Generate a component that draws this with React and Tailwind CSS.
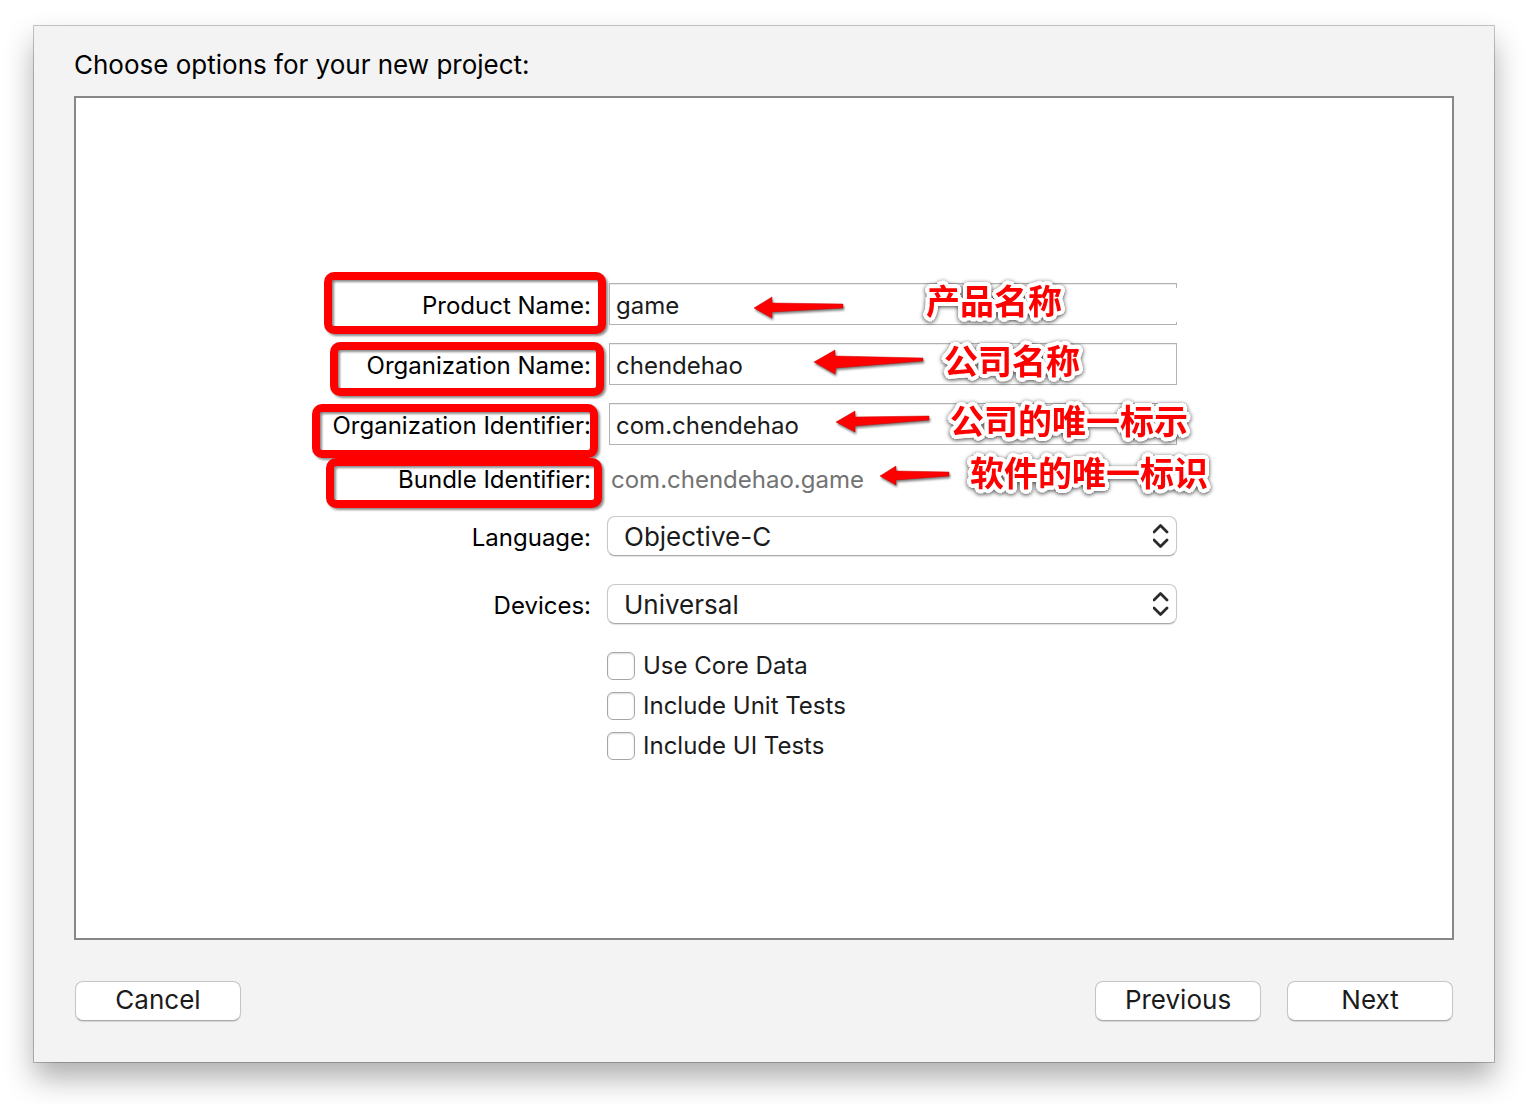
const labelClass = 'w-[259px] shrink-0 whitespace-nowrap text-right text-black';
const inputClass =
  'h-[42px] w-full rounded-none border border-[#b2b2b2] bg-white px-1.5 pt-0.5 text-[#1b1b1b] shadow-[inset_0_1px_0_#ececec] outline-none';
const frameClass =
  'pointer-events-none absolute rounded-[10px] border-8 border-[#ff0000] drop-shadow-[2px_2px_1px_rgba(0,0,0,0.45)]';
const noteClass =
  'pointer-events-none absolute whitespace-nowrap font-["Noto_Sans_CJK_SC",sans-serif] text-[34px] font-bold leading-[40px] text-[#ff0000] [text-shadow:4px_0_white,4px_1px_white,3px_3px_white,1px_4px_white,0_4px_white,-1px_4px_white,-3px_3px_white,-4px_1px_white,-4px_0_white,-4px_-1px_white,-3px_-3px_white,-1px_-4px_white,0_-4px_white,1px_-4px_white,3px_-3px_white,4px_-1px_white,2px_0_white,0_2px_white,-2px_0_white,0_-2px_white] drop-shadow-[0_1px_2px_rgba(0,0,0,0.75)]';
const buttonClass =
  'h-10 w-[166px] rounded-lg border border-[#c6c6c6] border-b-[#a9a9a9] bg-white pb-0.5 text-[26px] leading-[36px] text-[#1b1b1b] shadow-[0_1px_1px_rgba(0,0,0,0.12)]';

function Arrow({ className, points }) {
  return (
    <svg
      className={`pointer-events-none absolute h-7 w-28 overflow-visible drop-shadow-[1px_2px_1px_rgba(0,0,0,0.5)] ${className}`}
      viewBox="0 0 112 28"
      aria-hidden="true"
    >
      <polygon points={points} fill="#ff0000" stroke="#c80000" strokeWidth="0.5" />
    </svg>
  );
}

function TextRow({ id, label, value, frame, arrow, points, note, noteAt, open }) {
  return (
    <div className="relative flex items-center gap-4">
      <span className={`${frameClass} ${frame}`} />
      <label htmlFor={id} className={`relative pt-1 ${labelClass}`}>
        {label}
      </label>
      <div className="relative flex-1 pl-0.5">
        <input id={id} type="text" defaultValue={value} className={inputClass} />
        {open && <span className="absolute bottom-[3px] right-0 top-[5px] w-0.5 bg-white" />}
      </div>
      <Arrow className={arrow} points={points} />
      <span className={`${noteClass} ${noteAt}`}>{note}</span>
    </div>
  );
}

function SelectRow({ id, label, value }) {
  return (
    <div className="flex items-center gap-4">
      <label htmlFor={id} className={`pt-1 ${labelClass}`}>
        {label}
      </label>
      <div className="relative flex-1">
        <select
          id={id}
          defaultValue={value}
          className="block h-10 w-full appearance-none rounded-lg border border-[#c8c8c8] border-b-[#a9a9a9] bg-white px-4 pt-0.5 text-[26px] text-[#1b1b1b] shadow-[0_1px_1px_rgba(0,0,0,0.12)] outline-none"
        >
          <option>{value}</option>
        </select>
        <svg
          className="pointer-events-none absolute right-2 top-2 h-6 w-4"
          viewBox="0 0 16 24"
          fill="none"
          stroke="#2b2b2b"
          strokeWidth="2.8"
          strokeLinecap="round"
          strokeLinejoin="round"
          aria-hidden="true"
        >
          <path d="M1 8 7.5 1.5 14 8M1 16 7.5 22.5 14 16" />
        </svg>
      </div>
    </div>
  );
}

const checks = ['Use Core Data', 'Include Unit Tests', 'Include UI Tests'];

export default function App() {
  return (
    <div className="flex min-h-screen flex-col bg-white px-[34px] pb-[42px] pt-[26px] font-['Inter',sans-serif]">
      <main className="flex flex-1 flex-col bg-[#f3f3f3] px-10 pb-[41px] shadow-[0_0_0_1px_rgba(0,0,0,0.22),0_16px_28px_rgba(0,0,0,0.32)]">
        <h1 className="pb-3.5 pt-[22px] text-[26px] leading-[34px] text-black">
          Choose options for your new project:
        </h1>
        <form className="flex flex-1 flex-col items-center justify-center border-2 border-[#878787] bg-white pr-[19px] pt-[7px] text-2xl">
          <div className="w-[845px]">
            <div className="flex flex-col gap-[18px]">
              <TextRow
                id="product"
                label="Product Name:"
                value="game"
                open
                frame="-left-2 -top-[11px] h-[62px] w-[282px]"
                arrow="left-[422px] top-3.5"
                points="0,11 18,0 18,6 89,7 89,11 18,15 18,21"
                note="产品名称"
                noteAt="left-[594px] -top-[3px]"
              />
              <TextRow
                id="org"
                label="Organization Name:"
                value="chendehao"
                frame="-left-0.5 -top-px h-[54px] w-[274px]"
                arrow="left-[482px] top-1.5"
                points="0,13 21,1 21,7 109,9 109,12 22,19 21,25"
                note="公司名称"
                noteAt="left-[612px] -top-[3px]"
              />
              <TextRow
                id="org-id"
                label="Organization Identifier:"
                value="com.chendehao"
                frame="-left-5 top-px h-[54px] w-[286px]"
                arrow="left-[504px] top-2"
                points="0,11 19,0 19,6 93,5 93,9 19,15 19,21"
                note="公司的唯一标示"
                noteAt="left-[618px] -top-[3px]"
              />
            </div>
            <div className="relative mt-4 flex h-[38px] items-center gap-4">
              <span className={`${frameClass} -left-1.5 -top-[3px] h-[50px] w-[276px]`} />
              <span className={`relative ${labelClass}`}>Bundle Identifier:</span>
              <output className="flex-1 pl-1 text-[#737373]">com.chendehao.game</output>
              <Arrow
                className="left-[548px] top-[5px]"
                points="0,10 16,0 16,5 69,6 69,10 16,14 16,19"
              />
              <span className={`${noteClass} left-[638px] -top-[9px]`}>软件的唯一标识</span>
            </div>
            <div className="mt-[17px] flex flex-col gap-7">
              <SelectRow id="language" label="Language:" value="Objective-C" />
              <SelectRow id="devices" label="Devices:" value="Universal" />
              <div className="ml-[275px] flex flex-col gap-3 text-[#1b1b1b]">
                {checks.map((name) => (
                  <label key={name} className="flex h-7 items-center gap-2">
                    <input
                      type="checkbox"
                      className="h-7 w-7 appearance-none rounded-md border border-[#a6a6a6] bg-white shadow-[inset_0_1px_2px_rgba(0,0,0,0.15)]"
                    />
                    {name}
                  </label>
                ))}
              </div>
            </div>
          </div>
        </form>
        <footer className="mt-[41px] flex gap-[26px] px-px">
          <button type="button" className={`mr-auto ${buttonClass}`}>
            Cancel
          </button>
          <button type="button" className={buttonClass}>
            Previous
          </button>
          <button type="button" className={buttonClass}>
            Next
          </button>
        </footer>
      </main>
    </div>
  );
}
